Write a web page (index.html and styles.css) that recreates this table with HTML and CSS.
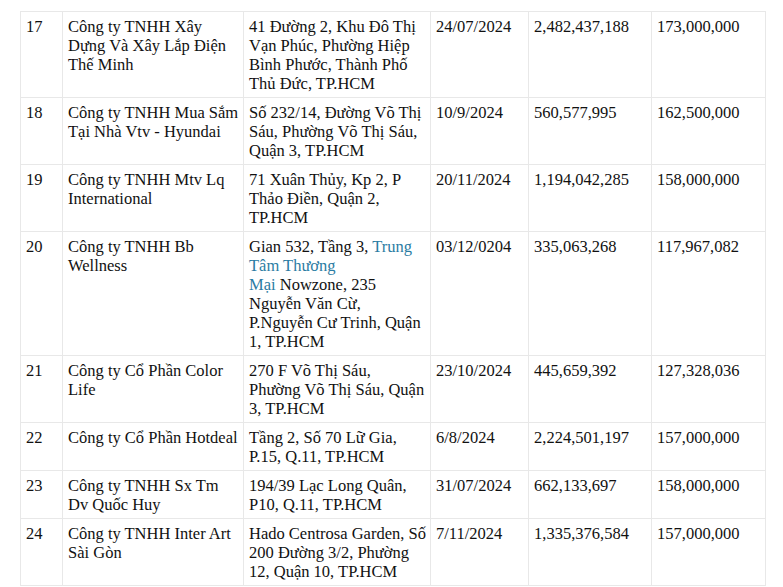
FILE: index.html
```html
<!DOCTYPE html>
<html lang="vi">
<head>
<meta charset="utf-8">
<title>Danh sách doanh nghiệp</title>
<link rel="stylesheet" href="styles.css">
</head>
<body>
<div class="page">
<table class="list">
<colgroup>
<col class="c-no"><col class="c-name"><col class="c-addr"><col class="c-date"><col class="c-num"><col class="c-tax">
</colgroup>
<tbody>
<tr class="r4">
<td>17</td>
<td>Công ty TNHH Xây<br>Dựng Và Xây Lắp Điện<br>Thế Minh</td>
<td>41 Đường 2, Khu Đô Thị<br>Vạn Phúc, Phường Hiệp<br>Bình Phước, Thành Phố<br>Thủ Đức, TP.HCM</td>
<td>24/07/2024</td>
<td>2,482,437,188</td>
<td>173,000,000</td>
</tr>
<tr>
<td>18</td>
<td>Công ty TNHH Mua Sắm<br>Tại Nhà Vtv - Hyundai</td>
<td>Số 232/14, Đường Võ Thị<br>Sáu, Phường Võ Thị Sáu,<br>Quận 3, TP.HCM</td>
<td>10/9/2024</td>
<td>560,577,995</td>
<td>162,500,000</td>
</tr>
<tr>
<td>19</td>
<td>Công ty TNHH Mtv Lq<br>International</td>
<td>71 Xuân Thủy, Kp 2, P<br>Thảo Điền, Quận 2,<br>TP.HCM</td>
<td>20/11/2024</td>
<td>1,194,042,285</td>
<td>158,000,000</td>
</tr>
<tr>
<td>20</td>
<td>Công ty TNHH Bb<br>Wellness</td>
<td>Gian 532, Tầng 3, <a class="link" href="#">Trung<br>Tâm Thương<br>Mại</a> Nowzone, 235<br>Nguyễn Văn Cừ,<br>P.Nguyễn Cư Trinh, Quận<br>1, TP.HCM</td>
<td>03/12/0204</td>
<td>335,063,268</td>
<td>117,967,082</td>
</tr>
<tr>
<td>21</td>
<td>Công ty Cổ Phần Color<br>Life</td>
<td>270 F Võ Thị Sáu,<br>Phường Võ Thị Sáu, Quận<br>3, TP.HCM</td>
<td>23/10/2024</td>
<td>445,659,392</td>
<td>127,328,036</td>
</tr>
<tr>
<td>22</td>
<td>Công ty Cổ Phần Hotdeal</td>
<td>Tầng 2, Số 70 Lữ Gia,<br>P.15, Q.11, TP.HCM</td>
<td>6/8/2024</td>
<td>2,224,501,197</td>
<td>157,000,000</td>
</tr>
<tr>
<td>23</td>
<td>Công ty TNHH Sx Tm<br>Dv Quốc Huy</td>
<td>194/39 Lạc Long Quân,<br>P10, Q.11, TP.HCM</td>
<td>31/07/2024</td>
<td>662,133,697</td>
<td>158,000,000</td>
</tr>
<tr>
<td>24</td>
<td>Công ty TNHH Inter Art<br>Sài Gòn</td>
<td>Hado Centrosa Garden, Số<br>200 Đường 3/2, Phường<br>12, Quận 10, TP.HCM</td>
<td>7/11/2024</td>
<td>1,335,376,584</td>
<td>157,000,000</td>
</tr>
</tbody>
</table>
</div>
</body>
</html>
```
FILE: styles.css
```css
html, body {
  margin: 0;
  padding: 0;
  background: #ffffff;
}
.page {
  padding: 11px 0 0 20px;
}
.list {
  border-collapse: collapse;
  table-layout: fixed;
  width: 745px;
  font-family: "Liberation Serif", "Times New Roman", serif;
  font-size: 16.5px;
  line-height: 19px;
  color: #111111;
}
.c-no { width: 42px; }
.c-name { width: 181px; }
.c-addr { width: 187px; }
.c-date { width: 98px; }
.c-num { width: 123px; }
.c-tax { width: 114px; }
.list td {
  border: 1px solid #e8e8e8;
  padding: 5px 4px 4px 5px;
  vertical-align: top;
  white-space: nowrap;
  overflow: hidden;
}
.link {
  color: #2b7ca3;
  text-decoration: none;
}
```
